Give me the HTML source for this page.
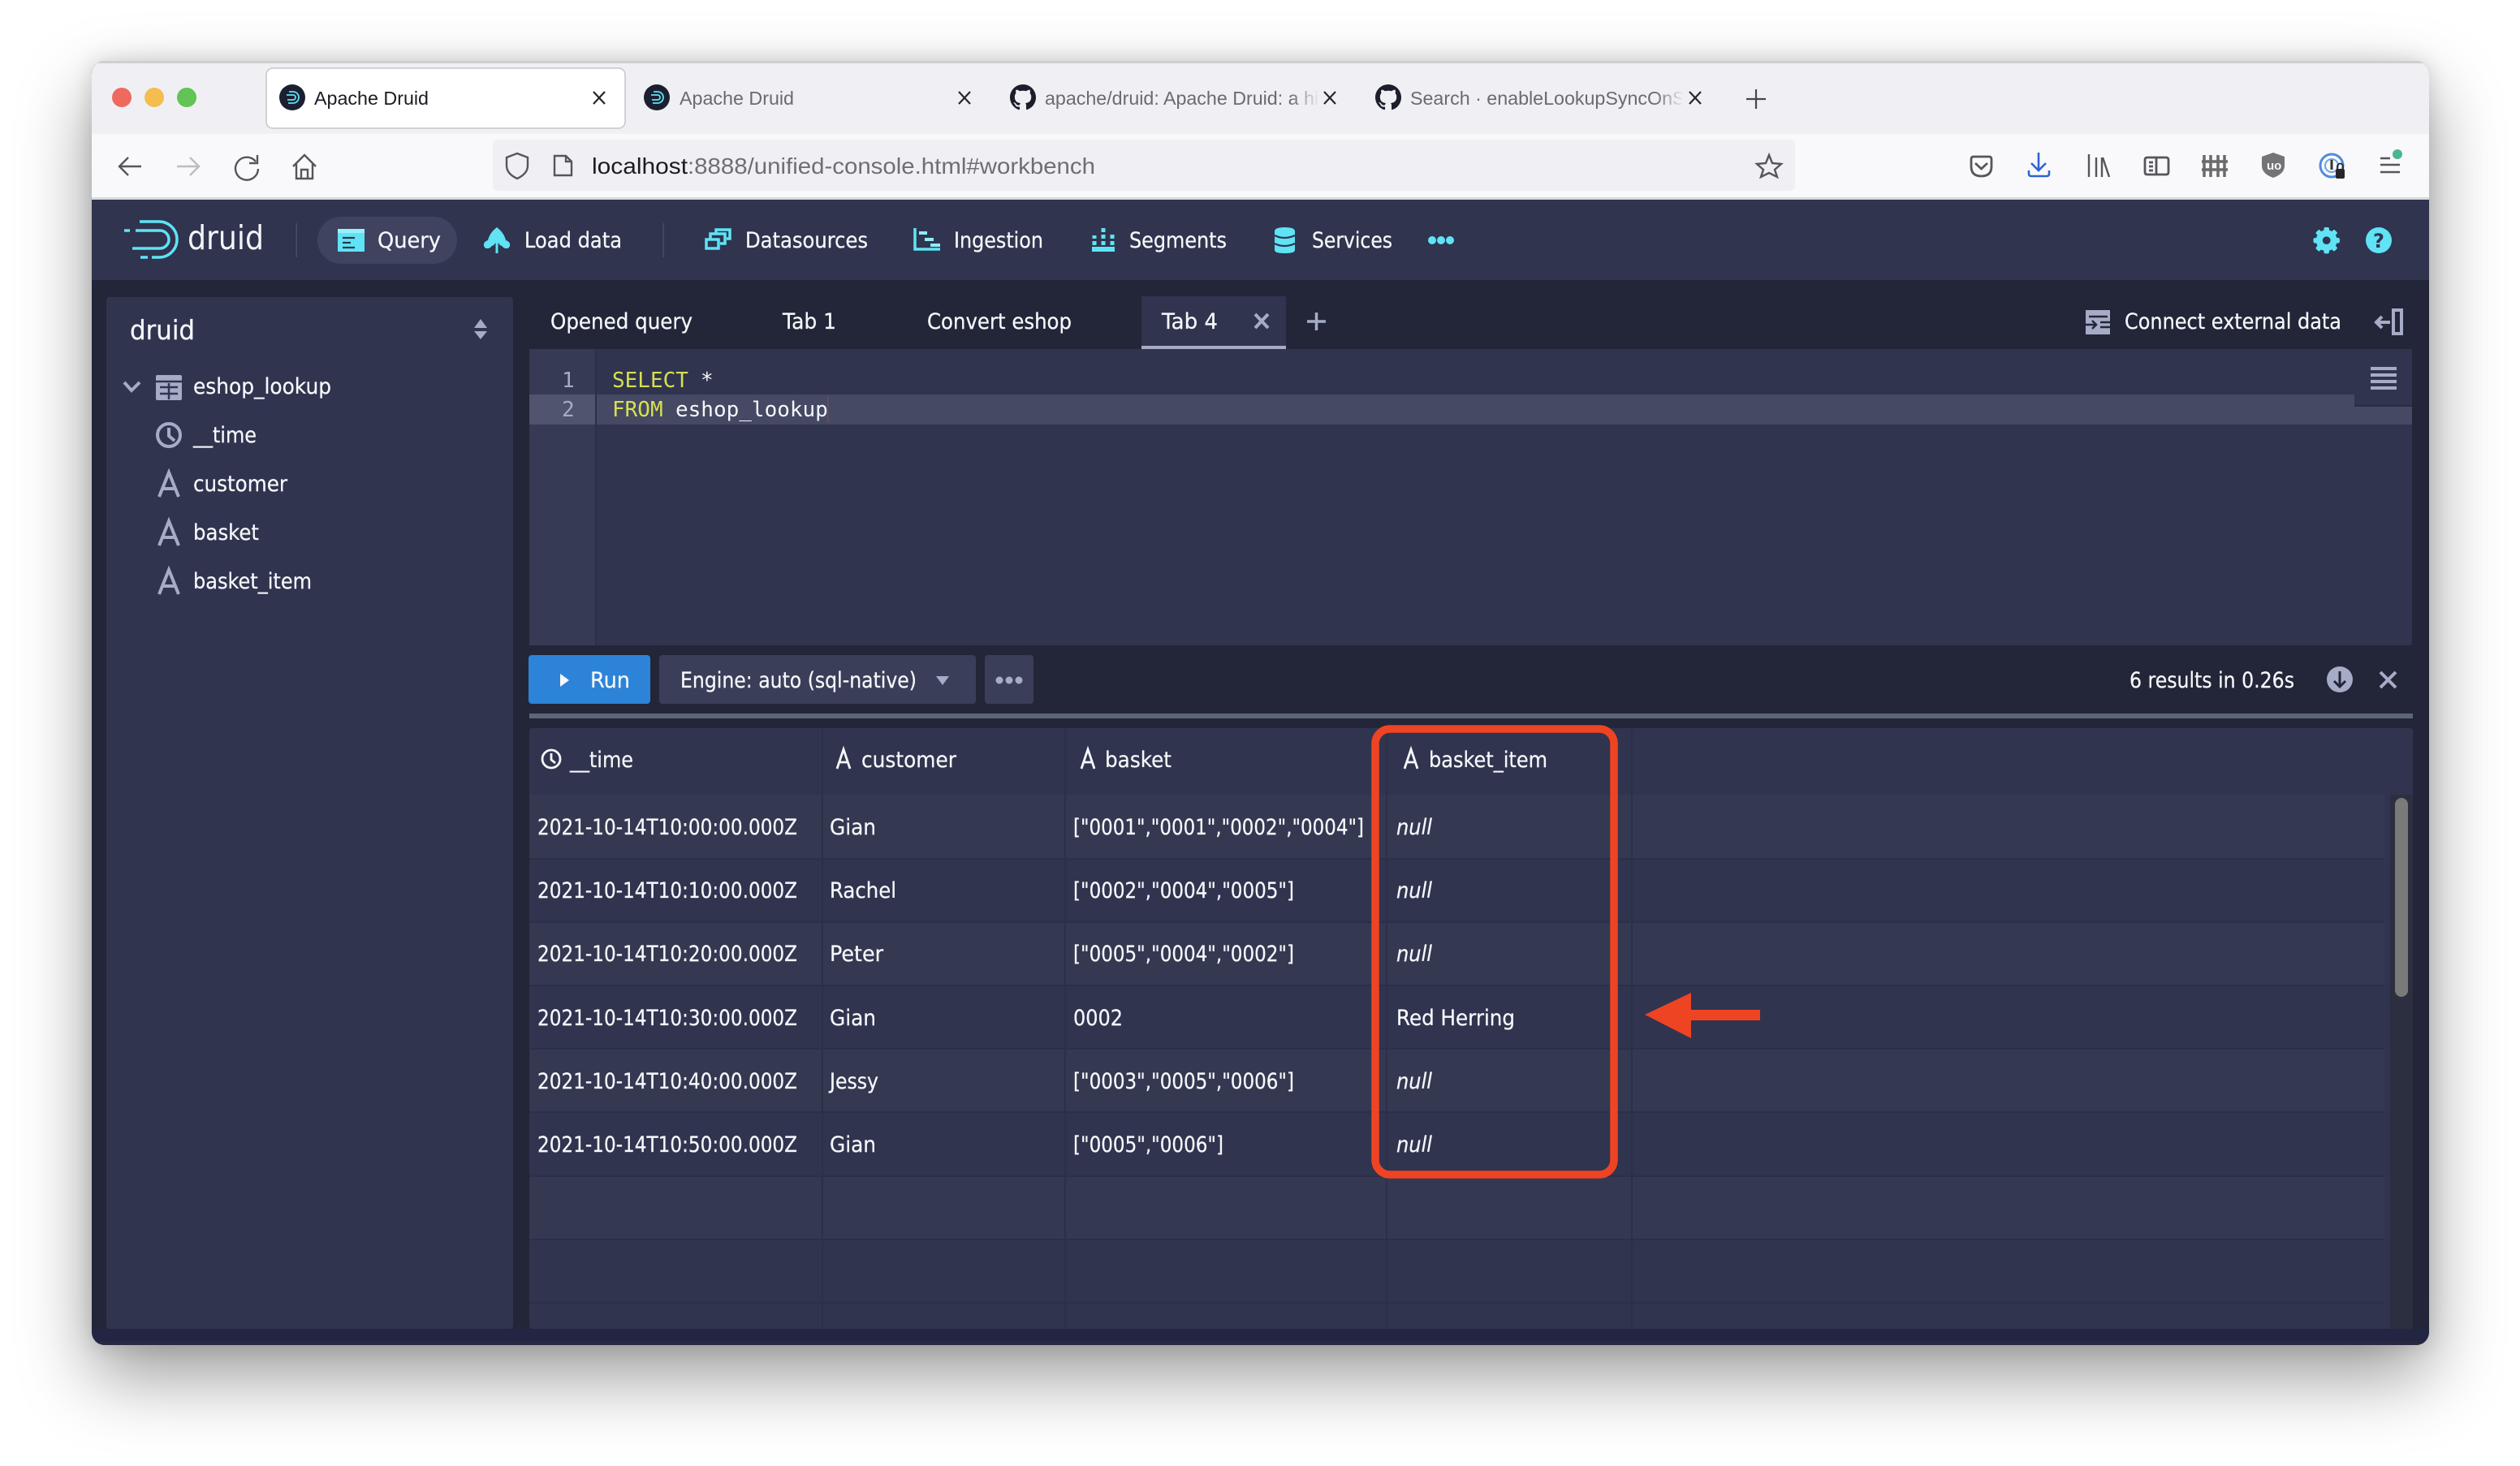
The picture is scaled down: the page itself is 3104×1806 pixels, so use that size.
<!DOCTYPE html>
<html><head><meta charset="utf-8"><title>Apache Druid</title>
<style>
html,body{margin:0;padding:0;background:#fff;width:3104px;height:1806px;overflow:hidden}
#sh{position:absolute;left:113px;top:75px;width:2879px;height:1582px;border-radius:16px;box-shadow:0 38px 90px rgba(0,0,0,.40),0 0 26px rgba(0,0,0,.14)}
svg{position:absolute;left:0;top:0}
text{white-space:pre}
.u{font-family:"DejaVu Sans",sans-serif;font-size:27px;fill:#f5f8fa;stroke:#f5f8fa;stroke-width:.25}
.i{font-style:italic}
.b{font-family:"Liberation Sans",sans-serif;font-size:23px;fill:#1c1b22}
.g{fill:#6a6a70}
.m{font-family:"DejaVu Sans Mono",monospace;font-size:26px;fill:#f5f8fa}
.k{fill:#d7e04e}
.ln{fill:#a6abc6}
.s{fill:none;stroke:#55555b;stroke-width:2.4}
.c{fill:#5fe3f5}
.cs{fill:none;stroke:#5fe3f5}
.a{fill:none;stroke:#a6abc6;stroke-width:4}
.w{fill:none;stroke:#f5f8fa;stroke-width:2.8}
</style></head><body>
<div id="sh"></div>
<svg width="3104" height="1806" viewBox="0 0 3104 1806" xmlns="http://www.w3.org/2000/svg">
<defs>
<clipPath id="win"><rect x="113" y="75" width="2879" height="1582" rx="16"/></clipPath>
<linearGradient id="fade"><stop offset="0" stop-color="#f0f0f4" stop-opacity="0"/><stop offset="1" stop-color="#f0f0f4"/></linearGradient>
<path id="gh" d="M8 0C3.58 0 0 3.58 0 8c0 3.54 2.29 6.53 5.47 7.59.4.07.55-.17.55-.38 0-.19-.01-.82-.01-1.49-2.01.37-2.53-.49-2.69-.94-.09-.23-.48-.94-.82-1.13-.28-.15-.68-.52-.01-.53.63-.01 1.08.58 1.23.82.72 1.21 1.87.87 2.33.66.07-.52.28-.87.51-1.07-1.78-.2-3.64-.89-3.64-3.95 0-.87.31-1.59.82-2.15-.08-.2-.36-1.02.08-2.12 0 0 .67-.21 2.2.82.64-.18 1.32-.27 2-.27.68 0 1.36.09 2 .27 1.53-1.04 2.2-.82 2.2-.82.44 1.1.16 1.92.08 2.12.51.56.82 1.27.82 2.15 0 3.07-1.87 3.75-3.65 3.95.29.25.54.73.54 1.48 0 1.07-.01 1.93-.01 2.2 0 .21.15.46.55.38A8.013 8.013 0 0016 8c0-4.42-3.58-8-8-8z"/>
<g id="fav"><circle cx="0" cy="0" r="16" fill="#1b2030"/><path d="M-4-7H1A7 7 0 0 1 1 7H-5M-7-3H1A3 3 0 0 1 1 3H-6" fill="none" stroke="#5fe3f5" stroke-width="1.8"/></g>
<path id="A" d="M1 30L13 0L25 30M5 20H21"/>
<path id="Ah" d="M1 24L9 0L17 24M3.500 16H14.500"/>
</defs>
<g clip-path="url(#win)">
<rect x="113" y="75" width="2879" height="1582" fill="#222638"/>
<rect x="113" y="75" width="2879" height="92" fill="#f0f0f4"/>
<rect x="113" y="75" width="2879" height="3" fill="#cfcfd2"/>
<rect x="113" y="165" width="2879" height="80" fill="#f9f9fb"/>
<rect x="113" y="243" width="2879" height="3" fill="#d4dae0"/>
<rect x="113" y="246" width="2879" height="99" fill="#30344e"/>
<rect x="113" y="1637" width="2879" height="20" fill="#232642"/>
<rect x="113" y="1652" width="2879" height="5" fill="#2a2740"/>
</g>
<circle cx="150" cy="120" r="12" fill="#ee6a5f"/><circle cx="190" cy="120" r="12" fill="#f5bd4f"/><circle cx="230" cy="120" r="12" fill="#61c454"/>
<rect x="328" y="84" width="442" height="74" rx="8" fill="#fff" stroke="#c6c6c8" stroke-width="1.500"/>
<use href="#fav" x="360" y="120"/>
<text class="b" x="387" y="129" textLength="141" lengthAdjust="spacingAndGlyphs">Apache Druid</text>
<path d="M731 113L745 128M745 113L731 128" stroke="#26262b" stroke-width="2.200" fill="none"/>
<use href="#fav" x="809" y="120"/>
<text class="b g" x="837" y="129" textLength="141" lengthAdjust="spacingAndGlyphs">Apache Druid</text>
<path d="M1181 113L1195 128M1195 113L1181 128" stroke="#26262b" stroke-width="2.200" fill="none"/>
<use href="#gh" transform="translate(1244 104) scale(2)" fill="#1c1f2b"/>
<text class="b g" x="1287" y="129" textLength="350" lengthAdjust="spacingAndGlyphs">apache/druid: Apache Druid: a hig</text>
<rect x="1590" y="100" width="36" height="40" fill="url(#fade)"/><rect x="1624" y="100" width="30" height="40" fill="#f0f0f4"/>
<path d="M1631 113L1645 128M1645 113L1631 128" stroke="#26262b" stroke-width="2.200" fill="none"/>
<use href="#gh" transform="translate(1694 104) scale(2)" fill="#1c1f2b"/>
<text class="b g" x="1737" y="129" textLength="345" lengthAdjust="spacingAndGlyphs">Search · enableLookupSyncOnSt</text>
<rect x="2040" y="100" width="34" height="40" fill="url(#fade)"/><rect x="2072" y="100" width="30" height="40" fill="#f0f0f4"/>
<path d="M2081 113L2095 128M2095 113L2081 128" stroke="#26262b" stroke-width="2.200" fill="none"/>
<path d="M2163 110V134M2151 122H2175" stroke="#45454b" stroke-width="2.200" fill="none"/>
<path class="s" d="M174 205H148M158 194L147 205L158 216"/>
<path class="s" style="stroke:#bdbdc1" d="M218 205H244M234 194L245 205L234 216"/>
<path class="s" d="M315 199A14 14 0 1 0 318 208M317 191V201H307"/>
<path class="s" d="M361 205L375 191L389 205M365 202V220H385V202M371 220V209H379V220"/>
<rect x="607" y="172" width="1604" height="63" rx="6" fill="#f0f0f4"/>
<path class="s" d="M637 189L650 194V204Q650 214 637 220Q624 214 624 204V194Z"/>
<path class="s" d="M683 192H697L704 199V216H683ZM697 192V199H704"/>
<text x="729" y="214" font-family="Liberation Sans,sans-serif" font-size="28" textLength="118" lengthAdjust="spacingAndGlyphs" fill="#1c1b22">localhost</text>
<text x="847" y="214" font-family="Liberation Sans,sans-serif" font-size="28" textLength="502" lengthAdjust="spacingAndGlyphs" fill="#6e6e73">:8888/unified-console.html#workbench</text>
<path class="s" d="M2179 191L2183 201L2194 202L2186 209L2189 218L2179 213L2169 218L2172 209L2164 202L2175 201Z"/>
<path class="s" style="stroke-width:2.800" d="M2428 196Q2428 193 2431 193H2450Q2453 193 2453 196V205Q2453 217 2440.500 217Q2428 217 2428 205ZM2433 201L2440.500 208L2448 201"/>
<path d="M2511 188V210M2502 201L2511 210L2520 201M2499 210V214Q2499 217 2502 217H2521Q2524 217 2524 214V210" fill="none" stroke="#2f63d6" stroke-width="2.600"/>
<path class="s" style="stroke-width:2.400" d="M2573 190V218M2582 194V218M2589 194V218M2590 194L2598 218"/>
<path class="s" style="stroke-width:2.800" d="M2645 194H2668Q2671 194 2671 197V212Q2671 215 2668 215H2645Q2642 215 2642 212V197Q2642 194 2645 194ZM2656 194V215M2647 200H2652M2647 205H2652M2647 210H2652"/>
<path d="M2715 191V218M2723 191V218M2732 191V218M2740 191V218M2712 199H2744M2712 209H2744" fill="none" stroke="#69696e" stroke-width="3.500"/>
<path d="M2800 188L2814 193V204Q2814 214 2800 219Q2786 214 2786 204V193Z" fill="#737378"/><text x="2792" y="209" font-family="Liberation Sans,sans-serif" font-size="15" font-weight="bold" fill="#f9f9fb">uo</text>
<circle cx="2872" cy="204" r="14" fill="none" stroke="#4f8bdc" stroke-width="3"/><circle cx="2872" cy="204" r="8" fill="none" stroke="#6ea2e6" stroke-width="2"/><rect x="2870.500" y="197" width="3" height="12" fill="#333"/>
<rect x="2877" y="208" width="11" height="12" rx="2" fill="#26262a"/><path d="M2879 208V205A3.500 3.500 0 0 1 2886 205V208" fill="none" stroke="#26262a" stroke-width="1.800"/>
<path class="s" d="M2932 195H2944M2932 203H2956M2932 212H2956"/><circle cx="2953" cy="190" r="6" fill="#4cb58f"/>
<path class="cs" stroke-width="3.500" d="M172 273H196A22 22 0 0 1 196 317H187M173 317H182M153 284H160M167 284H197A11 11 0 0 1 197 306H163"/>
<text x="231" y="307" font-family="DejaVu Sans,sans-serif" font-size="41" fill="#f2f4f9" textLength="94" lengthAdjust="spacingAndGlyphs">druid</text>
<rect x="364.500" y="275" width="1.500" height="42" fill="#474b66"/>
<rect x="391" y="267" width="172" height="58" rx="29" fill="#3f4360"/>
<rect x="416" y="282" width="33" height="28" rx="1" class="c"/><rect x="416" y="282" width="33" height="5" fill="#9af0fa"/><path d="M422 293H437M422 299H432M422 305H437" stroke="#30344e" stroke-width="2.200"/>
<text class="u" x="465" y="305" textLength="78" lengthAdjust="spacingAndGlyphs">Query</text>
<path class="c" d="M612 280Q621 287 623 296Q629 298 628 303Q626 308 620 305L612 296L604 305Q598 308 596 303Q595 298 601 296Q603 287 612 280Z"/><path class="cs" stroke-width="3" d="M612 312V296M606 302L612 295L618 302"/>
<text class="u" x="646" y="305" textLength="120" lengthAdjust="spacingAndGlyphs">Load data</text>
<rect x="816.500" y="275" width="1.500" height="42" fill="#474b66"/>
<path class="cs" stroke-width="3.500" d="M870 295H885V306H870ZM875 294V288H893V300H887M882 287V283H899V294H895"/>
<text class="u" x="918" y="305" textLength="151" lengthAdjust="spacingAndGlyphs">Datasources</text>
<path class="cs" stroke-width="3.500" d="M1127 281V307H1158"/><path class="cs" stroke-width="4" d="M1132 287H1142M1139 295H1150M1146 302H1158" style="stroke:#8fecf7"/>
<text class="u" x="1175" y="305" textLength="110" lengthAdjust="spacingAndGlyphs">Ingestion</text>
<rect x="1345" y="304" width="28" height="6" class="c"/><path class="cs" stroke-width="5" stroke-dasharray="5 3" d="M1348 302V290M1359 302V280M1370 302V286"/>
<text class="u" x="1391" y="305" textLength="120" lengthAdjust="spacingAndGlyphs">Segments</text>
<path class="c" d="M1570 285Q1570 280 1582.500 280Q1595 280 1595 285V308Q1595 312 1582.500 312Q1570 312 1570 308Z"/><path d="M1570 290Q1582 296 1595 290M1570 300Q1582 306 1595 300" fill="none" stroke="#30344e" stroke-width="2.200"/>
<text class="u" x="1616" y="305" textLength="99" lengthAdjust="spacingAndGlyphs">Services</text>
<circle cx="1764" cy="296" r="5" class="c"/><circle cx="1775" cy="296" r="5" class="c"/><circle cx="1786" cy="296" r="5" class="c"/>
<g transform="translate(2849.500 280) scale(1.620)"><path class="c" d="M19 8h-1.260c-.19-.73-.48-1.420-.85-2.060l.94-.94a.996.996 0 000-1.410l-1.410-1.410a.996.996 0 00-1.410 0l-.94.94c-.64-.38-1.330-.66-2.060-.85V1c0-.55-.45-1-1-1H9c-.55 0-1 .45-1 1v1.260c-.76.19-1.460.49-2.110.88l-.88-.9a.996.996 0 00-1.410 0L2.190 3.650a.996.996 0 000 1.410l.9.9c-.39.65-.69 1.350-.88 2.110H1c-.55 0-1 .45-1 1v2c0 .55.45 1 1 1h1.260c.19.73.48 1.420.85 2.060l-.94.94a.996.996 0 000 1.410l1.410 1.410c.39.39 1.020.39 1.410 0l.94-.94c.64.38 1.330.66 2.060.85V19c0 .55.45 1 1 1h2c.55 0 1-.45 1-1v-1.260c.73-.19 1.420-.48 2.060-.85l.94.94c.39.39 1.020.39 1.410 0l1.410-1.410c.39-.39.39-1.020 0-1.410l-.94-.94c.38-.64.66-1.330.85-2.060H19c.55 0 1-.45 1-1V9c0-.55-.45-1-1-1z"/><circle cx="10" cy="10" r="3" fill="#30344e"/></g>
<circle cx="2930" cy="296" r="16" class="c"/><text x="2923" y="305" font-family="DejaVu Sans,sans-serif" font-weight="bold" font-size="24" fill="#30344e">?</text>
<rect x="131" y="366" width="501" height="1271" rx="4" fill="#30344f"/>
<text class="u" style="font-size:33px" x="160" y="418" textLength="80" lengthAdjust="spacingAndGlyphs">druid</text>
<path d="M592 393L600 404H584ZM592 418L584 408H600Z" fill="#a6abc6"/>
<path class="a" d="M153 471L162 481L172 471"/>
<rect x="192" y="462" width="32" height="31" rx="2" fill="#a6abc6"/><path d="M192 470H224M197 477H219M197 485H219M208 472V492" stroke="#30344f" stroke-width="2.500" fill="none"/>
<text class="u" x="238" y="485" textLength="170" lengthAdjust="spacingAndGlyphs">eshop_lookup</text>
<circle cx="208" cy="536" r="14" class="a"/><path class="a" d="M208 527V537L215 543"/>
<text class="u" x="238" y="545" textLength="78" lengthAdjust="spacingAndGlyphs">__time</text>
<use href="#A" x="195" y="582" class="a"/><text class="u" x="238" y="605" textLength="116" lengthAdjust="spacingAndGlyphs">customer</text>
<use href="#A" x="195" y="642" class="a"/><text class="u" x="238" y="665" textLength="81" lengthAdjust="spacingAndGlyphs">basket</text>
<use href="#A" x="195" y="702" class="a"/><text class="u" x="238" y="725" textLength="146" lengthAdjust="spacingAndGlyphs">basket_item</text>
<text class="u" x="678" y="405" textLength="175" lengthAdjust="spacingAndGlyphs">Opened query</text>
<text class="u" x="964" y="405" textLength="66" lengthAdjust="spacingAndGlyphs">Tab 1</text>
<text class="u" x="1142" y="405" textLength="178" lengthAdjust="spacingAndGlyphs">Convert eshop</text>
<rect x="1406" y="365" width="178" height="65" fill="#30344f"/><rect x="1406" y="426" width="178" height="4" fill="#a6abc6"/>
<text class="u" x="1431" y="405" textLength="69" lengthAdjust="spacingAndGlyphs">Tab 4</text>
<path d="M1546 387L1562 404M1562 387L1546 404" stroke="#a6abc6" stroke-width="4" fill="none"/>
<path d="M1621.500 385V407M1610 396H1633" stroke="#a6abc6" stroke-width="3.500" fill="none"/>
<rect x="2569" y="382" width="30" height="30" fill="#a6abc6"/><path d="M2573 390H2596M2587 397H2599M2587 403H2599M2569 400H2582M2577 395L2582 400L2577 405" stroke="#222638" stroke-width="2.500" fill="none"/>
<text class="u" x="2617" y="405" textLength="267" lengthAdjust="spacingAndGlyphs">Connect external data</text>
<path d="M2948 382H2958V411H2948ZM2944 397H2928M2934 390L2927 397L2934 404" fill="none" stroke="#a6abc6" stroke-width="4"/>
<rect x="652" y="430" width="2319" height="365" rx="3" fill="#30344f"/>
<rect x="652" y="430" width="82" height="365" fill="#363a54"/>
<rect x="652" y="486" width="2319" height="37" fill="#454963"/>
<rect x="652" y="486" width="82" height="37" fill="#50546e"/>
<rect x="733" y="430" width="2" height="365" fill="#2b2f48"/>
<rect x="2900" y="430" width="71" height="70" fill="#30344f"/><rect x="2900" y="499" width="71" height="2" fill="#292d44"/>
<path d="M2920 454H2952M2920 462H2952M2920 470H2952M2920 478H2952" stroke="#a6abc6" stroke-width="4" fill="none"/>
<text class="m ln" x="692" y="477">1</text><text class="m ln" x="692" y="513">2</text>
<text class="m k" x="754" y="477">SELECT</text><text class="m" x="863" y="477">*</text>
<text class="m k" x="754" y="513">FROM</text><text class="m" x="832" y="513">eshop_lookup</text>
<rect x="1019" y="488" width="1.500" height="33" fill="#6e4a5e"/>
<rect x="651" y="807" width="150" height="60" rx="4" fill="#2d83d8"/>
<path d="M690 830L701 838L690 846Z" fill="#f5f8fa"/>
<text class="u" x="727" y="847" textLength="49" lengthAdjust="spacingAndGlyphs">Run</text>
<rect x="812" y="807" width="390" height="60" rx="4" fill="#3a3e59"/>
<text class="u" x="838" y="847" textLength="291" lengthAdjust="spacingAndGlyphs">Engine: auto (sql-native)</text>
<path d="M1153 833H1169L1161 844Z" fill="#a6abc6"/>
<rect x="1213" y="807" width="60" height="60" rx="4" fill="#3a3e59"/>
<circle cx="1231" cy="838" r="4.500" fill="#a6abc6"/><circle cx="1243" cy="838" r="4.500" fill="#a6abc6"/><circle cx="1255" cy="838" r="4.500" fill="#a6abc6"/>
<text class="u" x="2623" y="847" textLength="203" lengthAdjust="spacingAndGlyphs">6 results in 0.26s</text>
<circle cx="2882" cy="837" r="16" fill="#a6abc6"/><path d="M2882 827V846M2875 839L2882 846L2889 839" fill="none" stroke="#222638" stroke-width="3"/>
<path d="M2932 828L2951 847M2951 828L2932 847" stroke="#a6abc6" stroke-width="4" fill="none"/>
<rect x="652" y="879" width="2320" height="6" fill="#5f6579"/>
<rect x="652" y="897" width="2320" height="740" rx="3" fill="#30344f"/>
<g fill="#343851">
<rect x="652" y="979" width="2285" height="78"/><rect x="652" y="1135" width="2285" height="78"/><rect x="652" y="1291" width="2285" height="78"/><rect x="652" y="1448" width="2285" height="78"/>
</g>
<g fill="#2b2f48">
<rect x="652" y="1057" width="2285" height="2"/><rect x="652" y="1135" width="2285" height="2"/><rect x="652" y="1213" width="2285" height="2"/><rect x="652" y="1291" width="2285" height="2"/><rect x="652" y="1369" width="2285" height="2"/><rect x="652" y="1448" width="2285" height="2"/><rect x="652" y="1526" width="2285" height="2"/><rect x="652" y="1604" width="2285" height="2"/>
<rect x="1012" y="897" width="2" height="740"/><rect x="1311" y="897" width="2" height="740"/><rect x="1707" y="897" width="2" height="740"/><rect x="2009" y="897" width="2" height="740"/>
</g>
<rect x="2944" y="979" width="28" height="658" fill="#2c2f40"/>
<rect x="2950" y="983" width="16" height="245" rx="8" fill="#7a7a78"/>
<circle cx="679" cy="935" r="11" class="w"/><path class="w" d="M679 928V936L684 940"/>
<text class="u" x="702" y="945" textLength="78" lengthAdjust="spacingAndGlyphs">__time</text>
<use href="#Ah" x="1030" y="923" class="w"/><text class="u" x="1061" y="945" textLength="117" lengthAdjust="spacingAndGlyphs">customer</text>
<use href="#Ah" x="1331" y="923" class="w"/><text class="u" x="1361" y="945" textLength="82" lengthAdjust="spacingAndGlyphs">basket</text>
<use href="#Ah" x="1729" y="923" class="w"/><text class="u" x="1760" y="945" textLength="146" lengthAdjust="spacingAndGlyphs">basket_item</text>
<g>
<text class="u" x="662" y="1028" textLength="320" lengthAdjust="spacingAndGlyphs">2021-10-14T10:00:00.000Z</text>
<text class="u" x="662" y="1106" textLength="320" lengthAdjust="spacingAndGlyphs">2021-10-14T10:10:00.000Z</text>
<text class="u" x="662" y="1184" textLength="320" lengthAdjust="spacingAndGlyphs">2021-10-14T10:20:00.000Z</text>
<text class="u" x="662" y="1263" textLength="320" lengthAdjust="spacingAndGlyphs">2021-10-14T10:30:00.000Z</text>
<text class="u" x="662" y="1341" textLength="320" lengthAdjust="spacingAndGlyphs">2021-10-14T10:40:00.000Z</text>
<text class="u" x="662" y="1419" textLength="320" lengthAdjust="spacingAndGlyphs">2021-10-14T10:50:00.000Z</text>
<text class="u" x="1022" y="1028" textLength="57" lengthAdjust="spacingAndGlyphs">Gian</text>
<text class="u" x="1022" y="1106" textLength="82" lengthAdjust="spacingAndGlyphs">Rachel</text>
<text class="u" x="1022" y="1184" textLength="66" lengthAdjust="spacingAndGlyphs">Peter</text>
<text class="u" x="1022" y="1263" textLength="57" lengthAdjust="spacingAndGlyphs">Gian</text>
<text class="u" x="1022" y="1341" textLength="60" lengthAdjust="spacingAndGlyphs">Jessy</text>
<text class="u" x="1022" y="1419" textLength="57" lengthAdjust="spacingAndGlyphs">Gian</text>
<text class="u" x="1322" y="1028" textLength="358" lengthAdjust="spacingAndGlyphs">["0001","0001","0002","0004"]</text>
<text class="u" x="1322" y="1106" textLength="272" lengthAdjust="spacingAndGlyphs">["0002","0004","0005"]</text>
<text class="u" x="1322" y="1184" textLength="272" lengthAdjust="spacingAndGlyphs">["0005","0004","0002"]</text>
<text class="u" x="1322" y="1263" textLength="61" lengthAdjust="spacingAndGlyphs">0002</text>
<text class="u" x="1322" y="1341" textLength="272" lengthAdjust="spacingAndGlyphs">["0003","0005","0006"]</text>
<text class="u" x="1322" y="1419" textLength="185" lengthAdjust="spacingAndGlyphs">["0005","0006"]</text>
<text class="u i" x="1720" y="1028" textLength="44" lengthAdjust="spacingAndGlyphs">null</text>
<text class="u i" x="1720" y="1106" textLength="44" lengthAdjust="spacingAndGlyphs">null</text>
<text class="u i" x="1720" y="1184" textLength="44" lengthAdjust="spacingAndGlyphs">null</text>
<text class="u" x="1720" y="1263" textLength="146" lengthAdjust="spacingAndGlyphs">Red Herring</text>
<text class="u i" x="1720" y="1341" textLength="44" lengthAdjust="spacingAndGlyphs">null</text>
<text class="u i" x="1720" y="1419" textLength="44" lengthAdjust="spacingAndGlyphs">null</text>
</g>
<rect x="1694" y="898" width="294" height="549" rx="18" fill="none" stroke="#ee4423" stroke-width="9.500"/>
<path d="M2026 1250L2083 1223V1244H2168V1257H2083V1279Z" fill="#ee4423"/>
</svg>
</body></html>
